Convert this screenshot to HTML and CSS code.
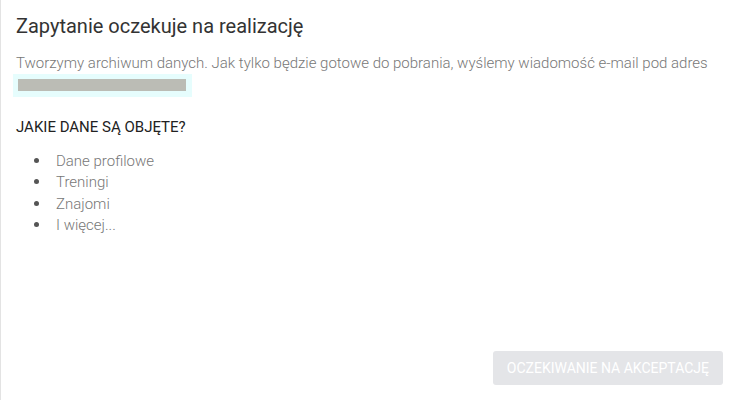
FILE: index.html
```html
<!DOCTYPE html>
<html lang="pl">
<head>
  <meta charset="UTF-8">
  <meta name="viewport" content="width=device-width, initial-scale=1.0">
  <title>Zapytanie oczekuje na realizację</title>
  <link rel="stylesheet" href="styles.css">
</head>
<body>
<div class="panel">
  <h2 class="title">Zapytanie oczekuje na realizację</h2>
  <p class="info">Tworzymy archiwum danych. Jak tylko będzie gotowe do pobrania, wyślemy wiadomość e-mail pod adres</p>
  <div class="email"><span class="email-mask"></span></div>

  <h3 class="subtitle">JAKIE DANE SĄ OBJĘTE?</h3>
  <ul class="data-list">
    <li>Dane profilowe</li>
    <li>Treningi</li>
    <li>Znajomi</li>
    <li>I więcej...</li>
  </ul>

  <div class="actions">
    <button class="btn-wait" disabled>Oczekiwanie na akceptację</button>
  </div>
</div>
</body>
</html>
```

FILE: styles.css
```css
html, body {
  margin: 0;
  height: 100%;
}
body {
  font-family: Roboto, "Liberation Sans", Arial, sans-serif;
  background: #fff;
  color: #333;
}
.panel {
  box-sizing: border-box;
  height: 100%;
  border-left: 1px solid #e3e3e3;
  padding: 14px 15px 15px 15px;
  display: flex;
  flex-direction: column;
}
.title {
  margin: 0;
  font-size: 20px;
  font-weight: 400;
  line-height: 24px;
  color: #333;
}
.info {
  margin: 15px 0 0;
  font-size: 15px;
  font-weight: 300;
  line-height: 20px;
  color: #777;
}
.email {
  align-self: flex-start;
  margin-top: 1px;
  margin-left: -3px;
  padding: 5px 6px 6px 5px;
  background: #e6fdfd;
}
.email-mask {
  display: block;
  width: 168px;
  height: 12px;
  background: #bbbcb5;
}
.subtitle {
  margin: 20px 0 0;
  font-size: 15px;
  font-weight: 400;
  line-height: 20px;
  color: #222;
}
.data-list {
  margin: 14px 0 0;
  padding-left: 40px;
  list-style: none;
  font-size: 15px;
  font-weight: 300;
  line-height: 21.3px;
  color: #777;
}
.data-list li::before {
  content: "";
  display: inline-block;
  width: 5px;
  height: 5px;
  border-radius: 50%;
  background: #555;
  margin-left: -22px;
  margin-right: 17px;
  vertical-align: 3px;
}
.actions {
  margin-top: auto;
  display: flex;
  justify-content: flex-end;
}
.btn-wait {
  height: 34px;
  padding: 0 14px;
  border: none;
  border-radius: 3px;
  background: #e4e5e8;
  color: #fff;
  font-family: inherit;
  font-size: 14px;
  text-transform: uppercase;
  cursor: default;
}
```
